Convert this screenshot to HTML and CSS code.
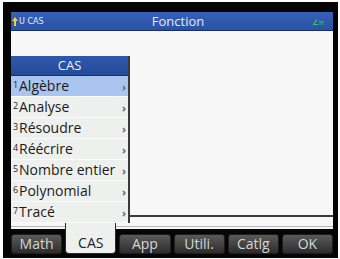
FILE: index.html
```html
<!DOCTYPE html>
<html lang="fr">
<head>
    <meta charset="UTF-8">
    <title>Fonction - CAS</title>
    <link rel="stylesheet" href="styles.css">
</head>
<body>
    <div class="device">
        <div class="screen">
            <div class="topbar">
                <div class="status-left">
                    <svg class="shift-icon" width="6" height="9" viewBox="0 0 6 9">
                        <path d="M3 0 L6 4 L4 4 L4 9 L2 9 L2 4 L0 4 Z" fill="#e8d23a"/>
                    </svg>
                    <span class="mode">U CAS</span>
                </div>
                <div class="title">Fonction</div>
                <div class="status-right">∠π</div>
            </div>
            <div class="workspace">
                <div class="menu">
                    <div class="menu-title">CAS</div>
                    <div class="menu-item selected"><span class="num">1</span><span class="label">Algèbre</span><span class="chev">›</span></div>
                    <div class="menu-item"><span class="num">2</span><span class="label">Analyse</span><span class="chev">›</span></div>
                    <div class="menu-item"><span class="num">3</span><span class="label">Résoudre</span><span class="chev">›</span></div>
                    <div class="menu-item"><span class="num">4</span><span class="label">Réécrire</span><span class="chev">›</span></div>
                    <div class="menu-item"><span class="num">5</span><span class="label">Nombre entier</span><span class="chev">›</span></div>
                    <div class="menu-item"><span class="num">6</span><span class="label">Polynomial</span><span class="chev">›</span></div>
                    <div class="menu-item"><span class="num">7</span><span class="label">Tracé</span><span class="chev">›</span></div>
                </div>
                <div class="entry-area">
                    <div class="history"></div>
                </div>
            </div>
            <div class="keys-sep"></div>
            <div class="softkeys">
                <div class="key">Math</div>
                <div class="key active">CAS</div>
                <div class="key">App</div>
                <div class="key">Utili.</div>
                <div class="key">Catlg</div>
                <div class="key">OK</div>
            </div>
        </div>
    </div>
</body>
</html>
```

FILE: styles.css
```css
body, html {
    margin: 0;
    padding: 0;
    background-color: #fff;
    font-family: 'Open Sans', 'Noto Sans', sans-serif;
}
.device {
    margin: 2px 0 0 3px;
    width: 322px;
    padding: 10px 5px 3px 8px;
    background-color: #050505;
}
.screen {
    background-color: #f7f7f7;
}
.topbar {
    height: 18px;
    display: flex;
    align-items: center;
    background: linear-gradient(#3561b8, #2a52a6);
    border-bottom: 1px solid #16306a;
    color: #dfe6f5;
}
.status-left {
    width: 110px;
    display: flex;
    align-items: center;
    padding-left: 1px;
}
.shift-icon {
    margin-right: 1px;
}
.mode {
    font-family: 'DejaVu Sans', sans-serif;
    font-size: 8px;
    color: #e6ecf8;
}
.title {
    flex: 1;
    text-align: center;
    font-size: 13px;
    color: #e4e8f2;
    margin-left: -10px;
}
.status-right {
    width: 80px;
    text-align: right;
    padding-right: 9px;
    font-size: 8px;
    color: #41d24a;
}
.workspace {
    display: flex;
    padding-top: 25px;
    height: 167px;
}
.menu {
    width: 117px;
    border-right: 2px solid #3a3a3a;
    background-color: #eef0ee;
    position: relative;
    z-index: 1;
    height: 167px;
}
.menu-title {
    height: 19px;
    line-height: 19px;
    text-align: center;
    color: #eef2fa;
    font-size: 13px;
    background: linear-gradient(#2f58ad, #254a98);
    border-bottom: 1px solid #172f66;
}
.menu-item {
    height: 20px;
    display: flex;
    align-items: center;
    border-bottom: 1px solid #fafbfa;
    color: #1a1a1a;
    padding-left: 2px;
}
.menu-item.selected {
    background-color: #aac6f0;
}
.num {
    font-size: 9px;
    width: 6px;
    color: #222;
    margin-top: -3px;
}
.label {
    flex: 1;
    font-size: 14px;
    line-height: 18px;
}
.chev {
    width: 6px;
    font-size: 11px;
    color: #666;
    font-weight: bold;
}
.entry-area {
    flex: 1;
    display: flex;
    flex-direction: column;
}
.history {
    height: 159px;
    border-bottom: 2px solid #3a3a3a;
}
.keys-sep {
    height: 6px;
    background: linear-gradient(#f7f7f7 0 3px, #b8b8b8 3px 4px, #f7f7f7 4px);
}
.softkeys {
    display: flex;
    gap: 3px;
    background-color: #050505;
    padding: 5px 0 1px;
}
.key {
    flex: 1;
    height: 18px;
    line-height: 18px;
    text-align: center;
    font-size: 14px;
    color: #d6d6d6;
    background: linear-gradient(#5a5a5a, #2c2c2c);
    border: 1px solid #1e1e1e;
    border-radius: 3px;
}
.key.active {
    background: #eef0ee;
    color: #222;
    border: 1px solid #2a2a2a;
    border-top: none;
    border-radius: 0 0 4px 4px;
    margin-top: -11px;
    height: 30px;
    line-height: 40px;
}
```
